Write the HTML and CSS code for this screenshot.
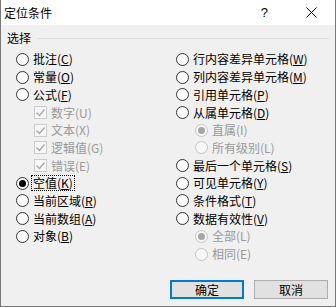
FILE: index.html
```html
<!DOCTYPE html>
<html lang="zh-CN">
<head>
<meta charset="utf-8">
<title>定位条件</title>
<link rel="stylesheet" href="styles.css">
</head>
<body>
<div class="dialog">
  <div class="titlebar">
    <span class="title">定位条件</span>
    <span class="help">?</span>
    <svg class="close" width="11" height="11" viewBox="0 0 11 11"><path d="M0.5 0.5 L10.5 10.5 M10.5 0.5 L0.5 10.5"/></svg>
  </div>
  <div class="content">
    <div class="group-head"><span class="group-label">选择</span><span class="group-line"></span></div>
    <div class="options">
      <div class="col col-left">
        <div class="opt"><span class="radio"></span><span class="lbl">批注(<u>C</u>)</span></div>
        <div class="opt"><span class="radio"></span><span class="lbl">常量(<u>O</u>)</span></div>
        <div class="opt"><span class="radio"></span><span class="lbl">公式(<u>F</u>)</span></div>
        <div class="opt sub-check disabled"><span class="check"><svg width="11" height="11" viewBox="0 0 11 11"><path d="M1.5 5.5 L4.5 8.5 L9.5 2.5"/></svg></span><span class="lbl">数字(U)</span></div>
        <div class="opt sub-check disabled"><span class="check"><svg width="11" height="11" viewBox="0 0 11 11"><path d="M1.5 5.5 L4.5 8.5 L9.5 2.5"/></svg></span><span class="lbl">文本(X)</span></div>
        <div class="opt sub-check disabled"><span class="check"><svg width="11" height="11" viewBox="0 0 11 11"><path d="M1.5 5.5 L4.5 8.5 L9.5 2.5"/></svg></span><span class="lbl">逻辑值(G)</span></div>
        <div class="opt sub-check disabled"><span class="check"><svg width="11" height="11" viewBox="0 0 11 11"><path d="M1.5 5.5 L4.5 8.5 L9.5 2.5"/></svg></span><span class="lbl">错误(E)</span></div>
        <div class="opt"><span class="radio checked"></span><span class="lbl focus">空值(<u>K</u>)</span></div>
        <div class="opt"><span class="radio"></span><span class="lbl">当前区域(<u>R</u>)</span></div>
        <div class="opt"><span class="radio"></span><span class="lbl">当前数组(<u>A</u>)</span></div>
        <div class="opt"><span class="radio"></span><span class="lbl">对象(<u>B</u>)</span></div>
      </div>
      <div class="col col-right">
        <div class="opt"><span class="radio"></span><span class="lbl">行内容差异单元格(<u>W</u>)</span></div>
        <div class="opt"><span class="radio"></span><span class="lbl">列内容差异单元格(<u>M</u>)</span></div>
        <div class="opt"><span class="radio"></span><span class="lbl">引用单元格(<u>P</u>)</span></div>
        <div class="opt"><span class="radio"></span><span class="lbl">从属单元格(<u>D</u>)</span></div>
        <div class="opt sub-radio disabled"><span class="radio checked"></span><span class="lbl">直属(I)</span></div>
        <div class="opt sub-radio disabled"><span class="radio"></span><span class="lbl">所有级别(L)</span></div>
        <div class="opt"><span class="radio"></span><span class="lbl">最后一个单元格(<u>S</u>)</span></div>
        <div class="opt"><span class="radio"></span><span class="lbl">可见单元格(<u>Y</u>)</span></div>
        <div class="opt"><span class="radio"></span><span class="lbl">条件格式(<u>T</u>)</span></div>
        <div class="opt"><span class="radio"></span><span class="lbl">数据有效性(<u>V</u>)</span></div>
        <div class="opt sub-radio disabled"><span class="radio checked"></span><span class="lbl">全部(L)</span></div>
        <div class="opt sub-radio disabled"><span class="radio"></span><span class="lbl">相同(E)</span></div>
      </div>
    </div>
    <div class="buttons">
      <button class="btn btn-default">确定</button>
      <button class="btn">取消</button>
    </div>
  </div>
</div>
</body>
</html>
```

FILE: styles.css
```css
html, body {
  margin: 0;
  padding: 0;
}
body {
  width: 336px;
  height: 307px;
  overflow: hidden;
  font-family: "Noto Sans CJK SC", "Microsoft YaHei", sans-serif;
  font-size: 12px;
  color: #000;
  background: #f0f0f0;
}
.dialog {
  box-sizing: border-box;
  width: 336px;
  height: 307px;
  border: 1px solid #7a7a7a;
  border-top: none;
  background: #f0f0f0;
  display: flex;
  flex-direction: column;
}
.titlebar {
  height: 25px;
  background: #fff;
  display: flex;
  align-items: center;
  flex: none;
}
.title {
  padding-left: 3px;
  line-height: 16px;
  font-size: 12px;
}
.help {
  margin-left: auto;
  font-family: "Liberation Sans", sans-serif;
  font-size: 13px;
  line-height: 14px;
  margin-right: 38px;
}
.close {
  display: block;
  margin-right: 18px;
  fill: none;
  stroke: #000;
  stroke-width: 1;
}
.content {
  padding: 6px 6px 0 6px;
  flex: 1;
}
.group-head {
  display: flex;
  align-items: center;
  height: 14px;
}
.group-label {
  line-height: 14px;
}
.group-line {
  flex: 1;
  height: 1px;
  background: #dcdcdc;
  margin-left: 6px;
}
.options {
  display: flex;
  margin-top: 5.65px;
  margin-left: 9px;
}
.col {
  display: flex;
  flex-direction: column;
}
.col-left {
  width: 160px;
}
.opt {
  display: flex;
  align-items: center;
  height: 17.7px;
  white-space: nowrap;
}
.lbl {
  line-height: 14px;
}
.lbl u {
  text-decoration: underline;
  text-underline-offset: 1px;
}
.radio {
  box-sizing: border-box;
  width: 13px;
  height: 13px;
  border: 1px solid #333;
  border-radius: 50%;
  background: #fff;
  margin-right: 4px;
  display: flex;
  align-items: center;
  justify-content: center;
  flex: none;
}
.radio.checked::after {
  content: "";
  width: 7px;
  height: 7px;
  border-radius: 50%;
  background: #000;
}
.check {
  box-sizing: border-box;
  width: 13px;
  height: 13px;
  border: 1px solid #cccccc;
  background: #f7f7f7;
  margin-right: 4px;
  display: flex;
  align-items: center;
  justify-content: center;
  flex: none;
}
.check svg {
  fill: none;
  stroke: #a6a6a6;
  stroke-width: 1.2;
}
.sub-check {
  padding-left: 18px;
}
.sub-radio {
  padding-left: 19px;
}
.disabled .lbl {
  color: #999;
}
.disabled .radio {
  border-color: #c4c4c4;
  background: #f7f7f7;
}
.disabled .radio.checked::after {
  background: #a6a6a6;
}
.focus {
  border: 1px dotted #000;
  padding: 0 1px;
  margin-left: -2px;
}
.buttons {
  display: flex;
  justify-content: flex-end;
  gap: 10px;
  margin-top: 17px;
  margin-right: 1px;
}
.btn {
  box-sizing: border-box;
  width: 74px;
  height: 19px;
  padding: 0;
  margin: 0;
  font-family: inherit;
  font-size: 12px;
  line-height: 15px;
  color: #000;
  background: #e1e1e1;
  border: 1px solid #adadad;
  border-radius: 0;
}
.btn-default {
  border: 2px solid #0078d7;
}
```
